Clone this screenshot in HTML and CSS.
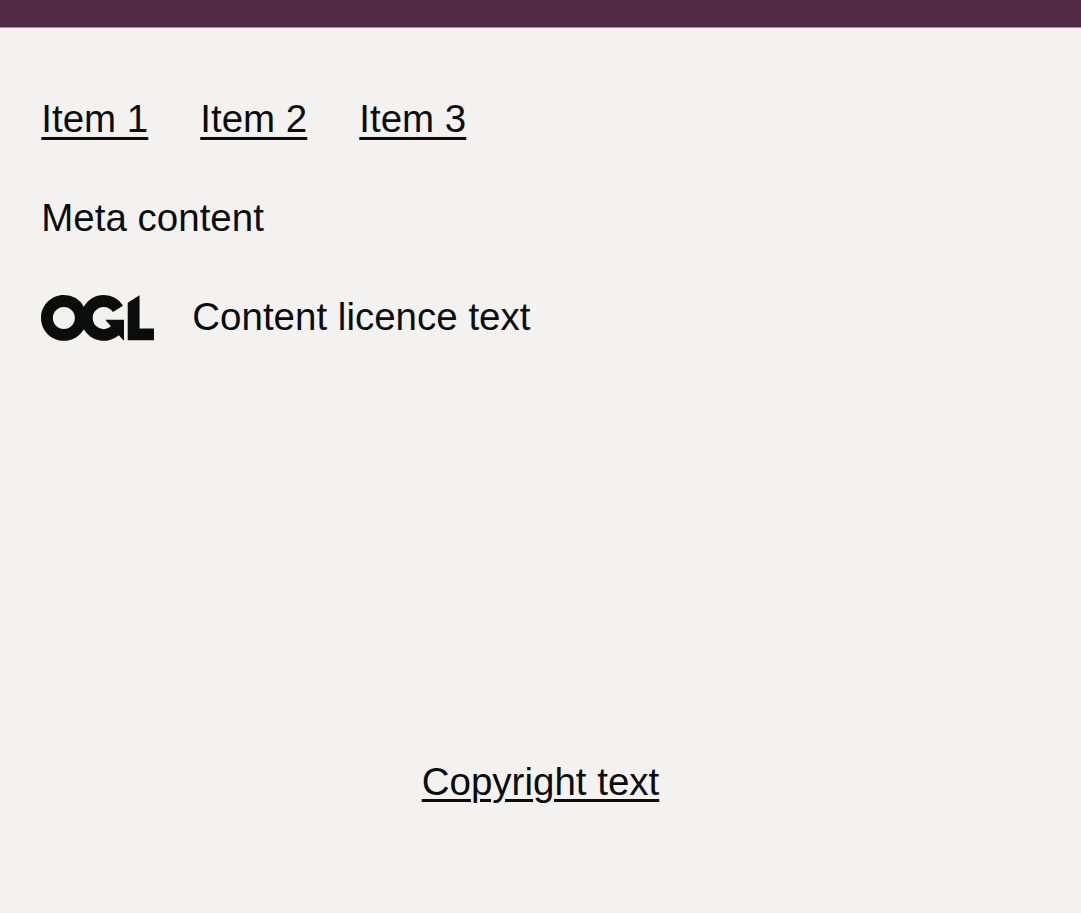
FILE: index.html
```html
<!DOCTYPE html>
<html lang="en">
<head>
<meta charset="utf-8">
<title>Footer</title>
<link rel="stylesheet" href="styles.css">
</head>
<body>
<footer class="footer">
  <ul class="footer-links">
    <li><a class="footer-link" href="#">Item 1</a></li>
    <li><a class="footer-link" href="#">Item 2</a></li>
    <li><a class="footer-link" href="#">Item 3</a></li>
  </ul>
  <div class="footer-meta">Meta content</div>
  <div class="footer-licence">
    <svg class="footer-logo" aria-hidden="true" focusable="false" xmlns="http://www.w3.org/2000/svg" viewBox="0 0 483.2 195.7" height="17" width="41">
      <path fill="currentColor" d="M421.5 142.8V.1l-50.7 32.3v161.1h112.4v-50.7zm-122.3-9.6A47.12 47.12 0 0 1 221 97.8c0-26 21.1-47.1 47.1-47.1 16.7 0 31.4 8.7 39.7 21.8l42.7-27.2A97.63 97.63 0 0 0 268.1 0c-36.5 0-68.3 20.1-85.1 49.7A98 98 0 0 0 97.8 0C43.9 0 0 43.9 0 97.8s43.9 97.8 97.8 97.8c36.5 0 68.3-20.1 85.1-49.7a97.76 97.76 0 0 0 149.6 25.4l19.4 22.2h3v-87.8h-80l24.3 27.5zM97.8 145c-26 0-47.1-21.1-47.1-47.1s21.1-47.1 47.1-47.1 47.1 21.1 47.1 47.1S123.8 145 97.8 145"/>
    </svg>
    <span class="footer-licence-text">Content licence text</span>
  </div>
  <div class="footer-copyright"><a class="footer-link" href="#">Copyright text</a></div>
</footer>
</body>
</html>
```
FILE: styles.css
```css
body {
  margin: 0;
  background: #f3f2f1;
}

.footer {
  box-sizing: border-box;
  min-height: 913px;
  padding: 65px 41.3px 0;
  border-top: 27px solid #532a45;
  background: linear-gradient(#a38f9b 1px, #f3f2f1 1px);
  color: #0b0c0c;
  font: 38.5px/53px "Liberation Sans", Arial, sans-serif;
}

.footer-links {
  display: flex;
  gap: 52px;
  margin: 0 0 46px;
  padding: 0;
  list-style: none;
}

.footer-link {
  color: inherit;
  text-decoration: underline;
  text-decoration-thickness: 2.7px;
  text-underline-offset: 5px;
}

.footer-copyright .footer-link {
  text-underline-offset: 4px;
}

.footer-meta {
  margin-bottom: 46px;
}

.footer-licence {
  display: flex;
  align-items: center;
  gap: 38px;
  margin-bottom: 412px;
}

.footer-logo {
  display: block;
  width: 113px;
  height: 46px;
  margin-top: 2px;
}

.footer-copyright {
  text-align: center;
}
```
